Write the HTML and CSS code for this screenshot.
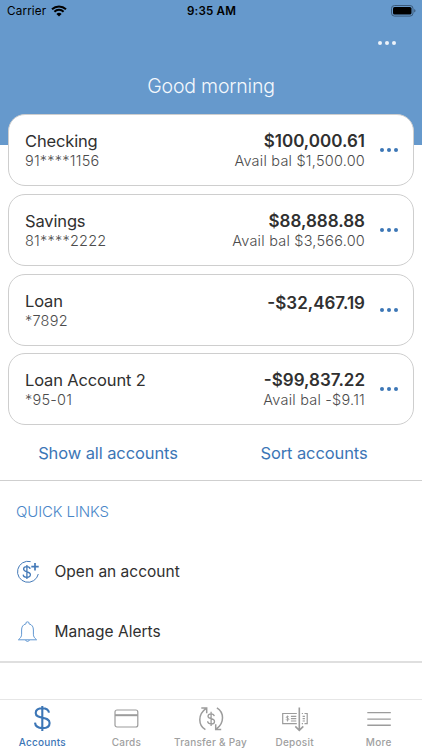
FILE: index.html
```html
<!DOCTYPE html>
<html lang="en">
<head>
<meta charset="utf-8">
<title>Accounts</title>
<link rel="stylesheet" href="styles.css">
</head>
<body>
<div class="app">
  <header class="hero">
    <div class="status">
      <div class="carrier"><span>Carrier</span>
        <svg width="16" height="12" viewBox="0 0 16 12"><path d="M1 4.200a10.200 10.200 0 0 1 14 0M3.400 6.700a6.700 6.700 0 0 1 9.200 0" fill="none" stroke="#000" stroke-width="2"/><path d="M5.400 8.900a3.800 3.800 0 0 1 5.200 0L8 11.500z"/></svg>
      </div>
      <div class="time">9:35 AM</div>
      <svg class="battery" width="25" height="12" viewBox="0 0 25 12"><rect x=".5" y=".5" width="21.500" height="10.600" rx="3" fill="none" stroke="#3b5a7b"/><rect x="2" y="2" width="18.500" height="7.600" rx="1.600"/><path d="M23.200 4v3.600q1.300-.6 1.300-1.800T23.200 4" fill="#3b5a7b"/></svg>
    </div>
    <div class="toolbar"><span class="dots light"><i></i><i></i><i></i></span></div>
    <h1>Good morning</h1>
  </header>
  <main>
    <section class="cards">
      <article class="card">
        <div class="info"><div class="name">Checking</div><div class="sub">91****1156</div></div>
        <div class="money"><div class="amount">$100,000.61</div><div class="sub">Avail bal $1,500.00</div></div>
        <span class="dots"><i></i><i></i><i></i></span>
      </article>
      <article class="card">
        <div class="info"><div class="name">Savings</div><div class="sub">81****2222</div></div>
        <div class="money"><div class="amount">$88,888.88</div><div class="sub">Avail bal $3,566.00</div></div>
        <span class="dots"><i></i><i></i><i></i></span>
      </article>
      <article class="card">
        <div class="info"><div class="name">Loan</div><div class="sub">*7892</div></div>
        <div class="money single"><div class="amount">-$32,467.19</div></div>
        <span class="dots"><i></i><i></i><i></i></span>
      </article>
      <article class="card">
        <div class="info"><div class="name">Loan Account 2</div><div class="sub">*95-01</div></div>
        <div class="money"><div class="amount">-$99,837.22</div><div class="sub">Avail bal -$9.11</div></div>
        <span class="dots"><i></i><i></i><i></i></span>
      </article>
    </section>
    <div class="actions"><a>Show all accounts</a><a>Sort accounts</a></div>
    <section class="links">
      <h2>QUICK LINKS</h2>
      <div class="link">
        <svg width="24" height="24" viewBox="0 0 24 24" fill="none" stroke="#447ab8"><path d="M14.600 1.600A10.500 10.500 0 1 0 22.300 14" stroke-width="1"/><path d="M14.100 8.800c-.2-1.600-1.500-2.200-3.300-2.200-2 0-3.200 1-3.200 2.500 0 3.700 6.800 1.600 6.800 5.500 0 1.700-1.400 2.700-3.500 2.700-2.200 0-3.600-.9-3.700-2.700M10.900 4.900v14.100" stroke-width="1.300"/><path d="M19 3v7.400M15.300 6.700h7.400" stroke-width="1.700"/></svg>
        <span>Open an account</span>
      </div>
      <div class="link">
        <svg width="24" height="24" viewBox="0 0 24 24" fill="none" stroke="#6298d2" stroke-width="1" stroke-linejoin="round"><path d="M10 3.800C6.800 4.600 5.600 7 5.600 10v4.200c0 2.600-1.100 3.600-3.200 5.600h18.200c-2.100-2-3.200-3-3.200-5.600V10c0-3-1.200-5.400-4.400-6.200a1.550 1.550 0 1 0-3 0M9.600 20c.4 1.900 3.400 1.900 3.800 0"/></svg>
        <span>Manage Alerts</span>
      </div>
    </section>
  </main>
  <nav class="tabs">
    <a class="tab active">
      <svg width="30" height="28" viewBox="0 0 30 28" fill="none" stroke="#3c76b6" stroke-width="2.100"><path d="M22 8.600C21.500 5.500 18.900 4.200 15.300 4.200c-3.900 0-6.600 1.700-6.600 4.700 0 6.900 13.900 2.800 13.900 10 0 3.300-2.900 5.200-7 5.200-4.500 0-7.300-1.800-7.600-5.400M15.300 2v25"/></svg>
      <span>Accounts</span></a>
    <a class="tab">
      <svg width="30" height="28" viewBox="0 0 30 28" fill="none" stroke="#9c9c9c" stroke-width="1.200"><rect x="4" y="6" width="22.800" height="17" rx="2"/><path d="M4 11.200h22.800" stroke-width="2"/></svg>
      <span>Cards</span></a>
    <a class="tab">
      <svg width="30" height="28" viewBox="0 0 30 28" fill="none" stroke="#9c9c9c" stroke-width="1.500"><path d="M9.400 25.700C2.300 21.500 1.300 10.500 10.200 4.300M5.300 3.900h5.400v5.300M20.900 3.800c7.200 4.300 8 15.200-.7 21.300M25.200 25.500h-5.500v-5.300"/><path d="M18.300 12.200c-.3-1.700-1.500-2.400-3.200-2.400-1.900 0-3.100.9-3.100 2.400 0 3.500 6.500 1.500 6.500 5.200 0 1.700-1.400 2.600-3.300 2.600-2.100 0-3.400-.9-3.600-2.700M15.100 7.800v14.200" stroke-width="1.300"/></svg>
      <span>Transfer &amp; Pay</span></a>
    <a class="tab">
      <svg width="30" height="28" viewBox="0 0 30 28" fill="none" stroke="#9c9c9c" stroke-width="1.200"><path d="M16.800 9.500H2.700v10.100h14.100M21.800 9.500h1.200M24.500 9.500h2.700v10.100h-2.700M21.800 19.600h1.200M10.900 12.400h5.400M10.900 14.700h5.400M10.900 17h5.400M22.600 12.400h2.300M22.600 14.700h2.300M22.600 17h2.300"/><path d="M8.800 13.100c-.5-1.200-2.700-.8-2.600.2.100 1.200 2.700.7 2.700 2 0 1.200-2.500 1.400-2.800.1M7.500 11.700v5.800" stroke-width=".9"/><path d="M19.300 3.500v22.700M15.300 22.400l4 4 4-4" stroke-width="1.600"/></svg>
      <span>Deposit</span></a>
    <a class="tab">
      <svg width="30" height="28" viewBox="0 0 30 28" stroke="#9c9c9c" stroke-width="1.400"><path d="M3.300 8.600h23.500M3.300 15.100h23.500M3.300 21.200h23.500"/></svg>
      <span>More</span></a>
  </nav>
</div>
</body>
</html>
```
FILE: styles.css
```css
* { box-sizing: border-box; margin: 0; padding: 0; }
body { font-family: Inter, "Liberation Sans", sans-serif; background: #fff; color: #303030; }
svg { display: block; flex: none; }
.app { width: 422px; height: 750px; display: flex; flex-direction: column; overflow: hidden; }

.hero { height: 145px; flex: none; background: #6699cc; }
.status { height: 22px; display: grid; grid-template-columns: 1fr auto 1fr; align-items: center; padding: 0 6px 0 7px; color: #000; }
.carrier { display: flex; align-items: center; gap: 5px; font-size: 11.700px; letter-spacing: 0.150px; }
.time { font-size: 11.600px; font-weight: 600; letter-spacing: 0.200px; }
.battery { justify-self: end; }
.toolbar { height: 42px; display: flex; justify-content: flex-end; align-items: center; padding-right: 26px; }
h1 { font-size: 19.500px; line-height: 24px; font-weight: 300; letter-spacing: -0.200px; text-align: center; margin-top: 10px; color: #f4f8fc; }

.dots { display: flex; gap: 3px; width: 18px; flex: none; }
.dots i { width: 4px; height: 4px; border-radius: 50%; background: #3c76b6; }
.dots.light i { background: #edf3fa; }

main { flex: 1; margin-top: -31px; }
.cards { display: flex; flex-direction: column; gap: 7.800px; padding: 0 8px; }
.card { height: 72px; display: flex; border: 1px solid #cecece; border-radius: 17px; background: #fff; padding: 16px 15px 0 16px; }
.info { flex: 1; }
.name, .amount { font-size: 16.500px; line-height: 21px; white-space: nowrap; }
.name { letter-spacing: -0.150px; }
.amount { font-size: 17px; font-weight: 600; }
.sub { font-size: 14.500px; line-height: 18px; font-weight: 300; letter-spacing: 0.220px; color: #4c4c4c; white-space: nowrap; }
.money { text-align: right; margin-right: 15px; }
.money.single { padding-top: 2px; }
.card .dots { margin-top: 17px; }

.actions { height: 54.400px; display: grid; grid-template-columns: 216px 1fr; text-align: center; align-items: center; color: #3c76b6; font-size: 16.500px; letter-spacing: -0.100px; }
.actions a:last-child { padding-right: 10px; }
.links { height: 183px; border-top: 1px solid #cfcfcf; border-bottom: 2px solid #dfdfdf; padding: 21.500px 16px 0; }
h2 { font-size: 15px; line-height: 20px; font-weight: 300; letter-spacing: -0.100px; color: #4886c8; margin-bottom: 19.500px; }
.link { height: 60px; display: flex; align-items: center; gap: 14.500px; font-size: 15.500px; }

.tabs { height: 51px; flex: none; border-top: 1px solid #e6e6e6; display: grid; grid-template-columns: repeat(5, 84.100px); padding-left: 0.300px; }
.tab { display: flex; flex-direction: column; align-items: center; padding-top: 4px; font-size: 10px; font-weight: 500; color: #a0a0a0; line-height: 12px; white-space: nowrap; }
.tab span { margin-top: 4px; letter-spacing: 0.250px; }
.tab.active { color: #3c76b6; }
```
